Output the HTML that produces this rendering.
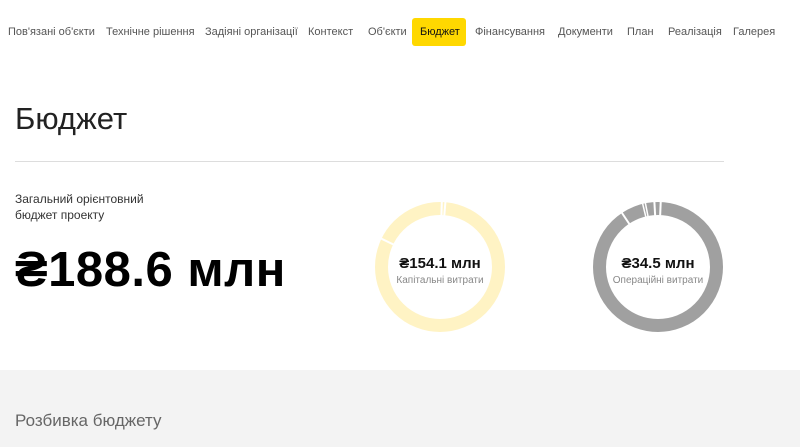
<!DOCTYPE html>
<html><head><meta charset="utf-8"><style>
body{margin:0;width:800px;height:447px;overflow:hidden;background:#fff;font-family:"Liberation Sans",sans-serif;position:relative}
.nav span{position:absolute;top:18px;line-height:28px;font-size:11px;color:#555;white-space:nowrap}
.nav .a{background:#ffd800;color:#111;border-radius:3px;padding:0 8px;left:412px;width:38px;text-align:center}
h1{position:absolute;left:15px;top:101px;margin:0;font-weight:400;font-size:31px;color:#222}
.hr{position:absolute;left:15px;top:161px;width:709px;height:1px;background:#ddd}
.lbl{position:absolute;left:15px;top:191px;font-size:12px;line-height:16px;color:#333}
.big{position:absolute;left:15px;top:242px;font-size:49px;font-weight:700;color:#000;letter-spacing:.5px}
.c{position:absolute;text-align:center;width:130px}
.c b{display:block;font-size:15px;color:#111}
.c i{display:block;font-style:normal;font-size:10px;color:#888;margin-top:3px}
.gray{position:absolute;left:0;top:370px;width:800px;height:77px;background:#f3f3f3}
.gray div{position:absolute;left:15px;top:41px;font-size:17px;color:#666}
</style></head><body>
<div class="nav"><span style="left:8px">Пов'язані об'єкти</span><span style="left:106px">Технічне рішення</span><span style="left:205px">Задіяні організації</span><span style="left:308px">Контекст</span><span style="left:368px">Об'єкти</span><span class="a">Бюджет</span><span style="left:475px">Фінансування</span><span style="left:558px">Документи</span><span style="left:627px">План</span><span style="left:668px">Реалізація</span><span style="left:733px">Галерея</span></div>
<h1>Бюджет</h1>
<div class="hr"></div>
<div class="lbl">Загальний орієнтовний<br>бюджет проекту</div>
<div class="big">₴188.6 млн</div>
<svg style="position:absolute;left:0;top:0" width="800" height="447">
<circle cx="440" cy="267" r="58.5" fill="none" stroke="#fff3c4" stroke-width="13"/>
<line x1="440" y1="267" x2="442" y2="195" stroke="#fff" stroke-width="2"/>
<line x1="440" y1="267" x2="446" y2="195" stroke="#fff" stroke-width="2"/>
<line x1="440" y1="267" x2="378" y2="237" stroke="#fff" stroke-width="2"/>
<circle cx="658" cy="267" r="58.5" fill="none" stroke="#a0a0a0" stroke-width="13"/>
<line x1="658" y1="267" x2="661" y2="195" stroke="#fff" stroke-width="2"/>
<line x1="658" y1="267" x2="654" y2="195" stroke="#fff" stroke-width="2"/>
<line x1="658" y1="267" x2="644" y2="196" stroke="#fff" stroke-width="1.5"/>
<line x1="658" y1="267" x2="641" y2="197" stroke="#fff" stroke-width="1.5"/>
<line x1="658" y1="267" x2="620" y2="210" stroke="#fff" stroke-width="2"/>
</svg>
<div class="c" style="left:375px;top:255px"><b>₴154.1 млн</b><i>Капітальні витрати</i></div>
<div class="c" style="left:593px;top:255px"><b>₴34.5 млн</b><i>Операційні витрати</i></div>
<div class="gray"><div>Розбивка бюджету</div></div>
</body></html>
